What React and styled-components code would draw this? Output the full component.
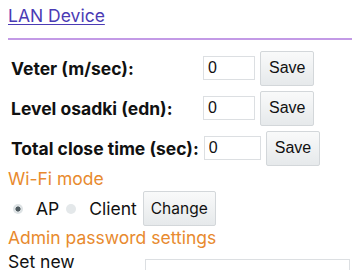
import React from "react";
import styled, { createGlobalStyle } from "styled-components";

const Global = createGlobalStyle`
  html, body { margin: 0; padding: 0; background: #fff; }
  body { font-family: "Inter", "Open Sans", sans-serif; color: #111; }
`;

const Page = styled.div`
  padding: 5px 8px 0 8px;
  width: 344px;
  height: 265px;
  overflow: hidden;
`;

const TopLink = styled.a`
  display: inline-block;
  font-size: 17.5px;
  line-height: 22px;
  color: #4b3bb5;
  text-decoration: underline;
  text-underline-offset: 2px;
`;

const Rule = styled.hr`
  border: 0;
  height: 2px;
  background: #c39ae6;
  margin: 11px 0 8px 0;
`;

const Row = styled.div`
  display: flex;
  align-items: center;
  height: 40px;
  padding-left: 3px;
`;

const Label = styled.span`
  font-weight: 700;
  font-size: 17.5px;
  min-width: ${(p) => p.$w ?? 192}px;
  margin-right: ${(p) => p.$gap ?? 0}px;
  white-space: nowrap;
`;

const Field = styled.input`
  box-sizing: border-box;
  width: ${(p) => p.$w || 52}px;
  height: 24px;
  border: 1px solid #dcdfe2;
  font-family: "Liberation Sans", sans-serif;
  font-size: 16px;
  padding: 0 4px;
  margin-right: 5px;
  color: #111;
  outline: none;
`;

const Btn = styled.button`
  box-sizing: border-box;
  height: 35px;
  padding: 0 8px;
  border: 1px solid #d3d7da;
  border-radius: 2px;
  background: linear-gradient(#f9fafa, #e6e9eb);
  font-family: "Liberation Sans", sans-serif;
  font-size: 16px;
  color: #111;
`;

const ChangeBtn = styled(Btn)`
  font-family: "Inter", sans-serif;
  font-size: 15.5px;
  padding: 0 7px;
`;

const Heading = styled.div`
  color: #e88a2e;
  font-size: 17.5px;
  line-height: 22px;
`;

const RadioRow = styled.div`
  display: flex;
  align-items: center;
  height: 37px;
  font-size: 17.5px;
`;

const Radio = styled.span`
  flex: none;
  width: 10px;
  height: 10px;
  border-radius: 50%;
  margin: 0 ${(p) => p.$mr}px 0 ${(p) => p.$ml}px;
  background: ${(p) =>
    p.$on
      ? "radial-gradient(circle, #505b60 0 2.2px, #dde2e4 2.9px)"
      : "#e4e8ea"};
`;

const Option = styled.span`
  margin-right: ${(p) => p.$mr}px;
`;

const PassRow = styled.div`
  display: flex;
  align-items: flex-start;
  font-size: 17.5px;
  line-height: 17px;
  padding-top: 4px;
`;

const PassLabel = styled.span`
  width: 137px;
`;

const PassInput = styled.input`
  box-sizing: border-box;
  width: 205px;
  height: 26px;
  margin-top: 6px;
  border: 1px solid #dcdfe2;
`;

export default function App() {
  return (
    <Page>
      <Global />
      <TopLink href="#">LAN Device</TopLink>
      <Rule />
      <Row>
        <Label>Veter (m/sec):</Label>
        <Field defaultValue="0" />
        <Btn>Save</Btn>
      </Row>
      <Row>
        <Label>Level osadki (edn):</Label>
        <Field defaultValue="0" />
        <Btn>Save</Btn>
      </Row>
      <Row>
        <Label $w={0} $gap={5}>Total close time (sec):</Label>
        <Field $w={57} defaultValue="0" />
        <Btn>Save</Btn>
      </Row>
      <Heading>Wi-Fi mode</Heading>
      <RadioRow>
        <Radio $on $ml={5} $mr={13} />
        <Option $mr={7}>AP</Option>
        <Radio $ml={0} $mr={13} />
        <Option $mr={6}>Client</Option>
        <ChangeBtn>Change</ChangeBtn>
      </RadioRow>
      <Heading>Admin password settings</Heading>
      <PassRow>
        <PassLabel>Set new</PassLabel>
        <PassInput type="password" />
      </PassRow>
    </Page>
  );
}
